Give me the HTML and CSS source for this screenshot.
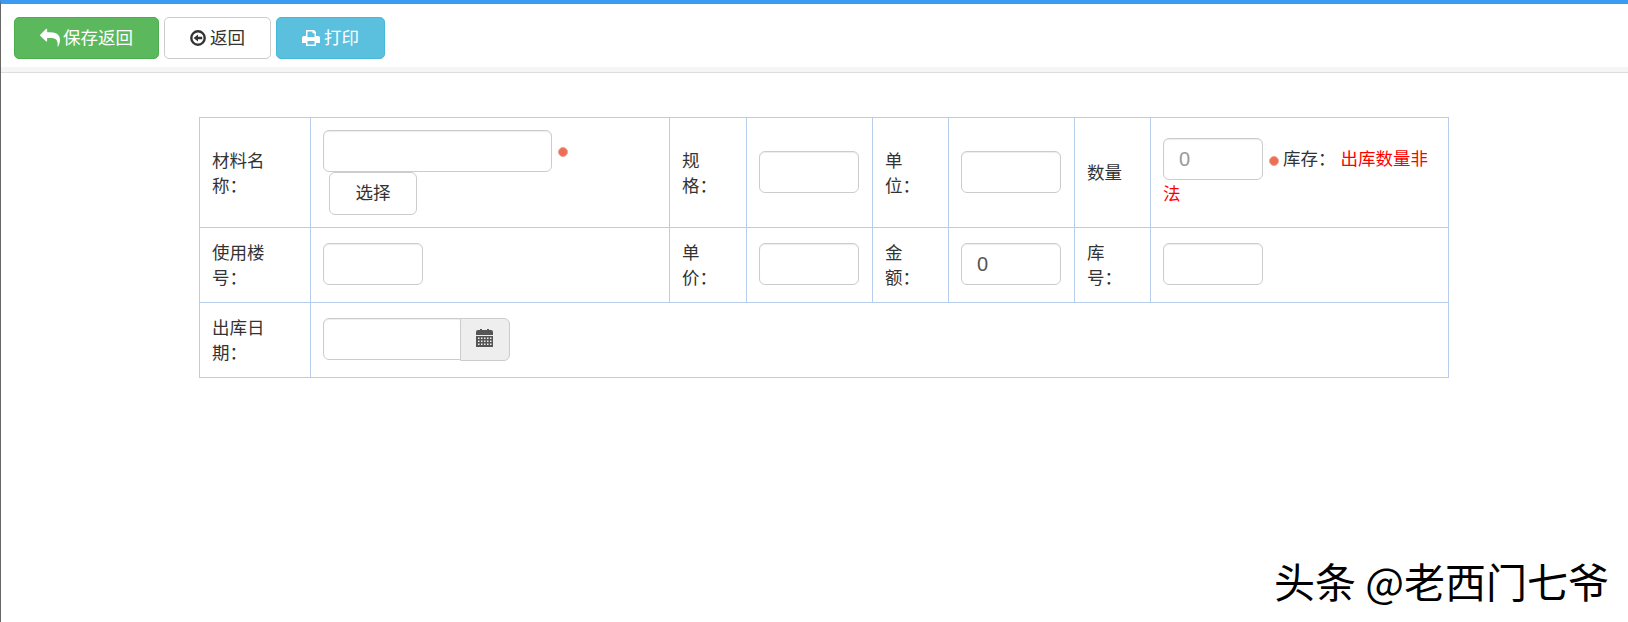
FILE: index.html
```html
<!DOCTYPE html>
<html lang="zh-CN">
<head>
<meta charset="utf-8">
<title>出库</title>
<link rel="stylesheet" href="styles.css">
</head>
<body>
<div class="toolbar">
  <button class="btn btn-green"><svg class="ico ico-reply" viewBox="0 0 1792 1792"><path fill="currentColor" d="M1792 1120q0 166-127 451-3 7-10.5 24t-13.500 30-13 22q-12 17-28 17-15 0-23.500-10t-8.500-25q0-9 2.500-26.500t2.500-23.500q5-68 5-123 0-101-17.500-181t-48.500-138.500-80-101-105.500-69.500-133-42.500-154-21.500-175.500-6h-224v256q0 26-19 45t-45 19-45-19l-512-512q-19-19-19-45t19-45l512-512q19-19 45-19t45 19 19 45v256h224q713 0 875 403 53 134 53 333z"/></svg>保存返回</button>
  <button class="btn btn-white"><svg class="ico" viewBox="0 0 16 16"><circle cx="8" cy="8" r="6.700" fill="none" stroke="currentColor" stroke-width="2.400"/><path fill="currentColor" d="M3.600 8 8 4.400v2.300h4.200v2.600H8v2.300z"/></svg>返回</button>
  <button class="btn btn-blue"><svg class="ico ico-print" viewBox="0 0 18 16"><path fill="currentColor" d="M4 0h8l2 2v4h2a2 2 0 0 1 2 2v5h-4v3H4v-3H0V8a2 2 0 0 1 2-2h2zm1.500 1.500V7h7V3.200h-2v-1.700zm0 9.500v3.500h7V11z"/></svg>打印</button>
</div>
<div class="strip"></div>
<main class="content">
  <table class="form">
    <colgroup>
      <col class="c1"><col class="c2"><col class="c3"><col class="c4"><col class="c5"><col class="c6"><col class="c7"><col class="c8">
    </colgroup>
    <tr class="r1">
      <td class="lbl">材料名<br>称：</td>
      <td><input class="inp inp-wide" type="text"><i class="dot dot-top"></i><br><button class="btn-pick">选择</button></td>
      <td class="lbl">规<br>格：</td>
      <td><input class="inp" type="text"></td>
      <td class="lbl">单<br>位：</td>
      <td><input class="inp" type="text"></td>
      <td class="lbl">数量</td>
      <td><input class="inp inp-muted" type="text" value="0"><i class="dot"></i><span>库存：</span><span class="err">出库数量非法</span></td>
    </tr>
    <tr class="r2">
      <td class="lbl">使用楼<br>号：</td>
      <td><input class="inp" type="text"></td>
      <td class="lbl">单<br>价：</td>
      <td><input class="inp" type="text"></td>
      <td class="lbl">金<br>额：</td>
      <td><input class="inp" type="text" value="0"></td>
      <td class="lbl">库<br>号：</td>
      <td><input class="inp" type="text"></td>
    </tr>
    <tr class="r2">
      <td class="lbl">出库日<br>期：</td>
      <td colspan="7">
        <div class="date">
          <input class="inp inp-date" type="text">
          <span class="addon"><svg class="cal" viewBox="0 0 17 18"><path fill="currentColor" d="M2 1h2V0h2v1h5V0h2v1h2a2 2 0 0 1 2 2v3H0V3a2 2 0 0 1 2-2z"/><path fill="currentColor" fill-rule="evenodd" d="M0 7h17v11H0zm2 1.500v1.500h1.500V8.500zm3 0v1.500h1.500V8.500zm3 0v1.500h1.500V8.500zm3 0v1.500h1.500V8.500zm3 0v1.500h1.500V8.500zm-12 3v1.500h1.500v-1.500zm3 0v1.500h1.500v-1.500zm3 0v1.500h1.500v-1.500zm3 0v1.500h1.500v-1.500zm3 0v1.500h1.500v-1.500zm-12 3v1.500h1.500v-1.500zm3 0v1.500h1.500v-1.500zm3 0v1.500h1.500v-1.500zm3 0v1.500h1.500v-1.500zm3 0v1.500h1.500v-1.500z"/></svg></span>
        </div>
      </td>
    </tr>
  </table>
</main>
<div class="mark">头条 @老西门七爷</div>
</body>
</html>
```
FILE: styles.css
```css
* { box-sizing: border-box; }
html, body { margin: 0; padding: 0; height: 100%; }
body {
  position: relative;
  overflow: hidden;
  background: #fff;
  color: #333;
  font: 17.5px/25px "Liberation Sans", "Noto Sans CJK SC", sans-serif;
  border-top: 4px solid #3a9bf0;
  border-left: 1px solid #666;
}
.toolbar { display: flex; gap: 5px; padding: 13px 13px 0; height: 63px; }
.btn {
  display: inline-flex; align-items: center; justify-content: center;
  height: 42px; border: 1px solid #ccc; border-radius: 5px;
  font: inherit; background: #fff; color: #333; padding: 0;
}
.btn-green { width: 145px; background: #5cb85c; border-color: #4cae4c; color: #fff; }
.btn-white { width: 107px; }
.btn-blue { width: 109px; background: #5bc0de; border-color: #46b8da; color: #fff; }
.ico { width: 16px; height: 16px; margin-right: 4px; }
.ico-reply { width: 20px; height: 20px; margin-right: 3px; }
.ico-print { width: 18px; margin-right: 4px; }
.strip { height: 6px; background: #f5f5f5; border-bottom: 1px solid #ddd; }
.content { padding: 44px 0 0 198px; }
.form { border-collapse: collapse; table-layout: fixed; width: 1249px; }
.form td { border: 1px solid #b6cdec; padding: 0 12px; vertical-align: middle; }
.form td.lbl { padding-top: 2px; }
.c1 { width: 111px; } .c2 { width: 359px; } .c3 { width: 77px; } .c4 { width: 126px; }
.c5 { width: 76px; } .c6 { width: 126px; } .c7 { width: 76px; } .c8 { width: 298px; }
.r1 { height: 110px; }
.r2 { height: 75px; }
.inp {
  width: 100px; height: 42px; margin-bottom: 2px; border: 1px solid #ccc; border-radius: 6px;
  font: inherit; font-size: 20px; color: #555; padding: 0 15px; vertical-align: middle; background: #fff;
  box-shadow: inset 0 1px 1px rgba(0,0,0,.075); outline: 0;
}
.inp-wide { width: 229px; margin-bottom: 0; }
.inp-muted { color: #999; }
.dot {
  display: inline-block; width: 10px; height: 10px; border-radius: 50%;
  background: #ee6e55; border: 1px solid #eba294; margin: 0 4px 0 6px; vertical-align: -1px;
}
.dot-top { vertical-align: -1px; margin-right: 0; }
.btn-pick {
  width: 88px; height: 43px; margin: 0 0 0 6px; background: #fff; border: 1px solid #ccc;
  border-radius: 6px; font: inherit; color: #333; vertical-align: top; padding: 0;
}
.err { color: #f00; margin-left: 5px; }
.date { display: flex; width: 188px; }
.inp-date { flex: none; width: 138px; border-radius: 6px 0 0 6px; }
.addon {
  flex: none; width: 50px; height: 43px; padding: 0 1px 3px 0; background: #eee; border: 1px solid #ccc;
  border-radius: 0 6px 6px 0; display: flex; align-items: center; justify-content: center; color: #555;
  margin-left: -1px;
}
.cal { width: 17px; height: 18px; }
.mark {
  position: absolute; right: 19px; top: 552px;
  font: 400 41px/48px "Noto Sans CJK SC", sans-serif; color: #000; white-space: nowrap;
}
```
